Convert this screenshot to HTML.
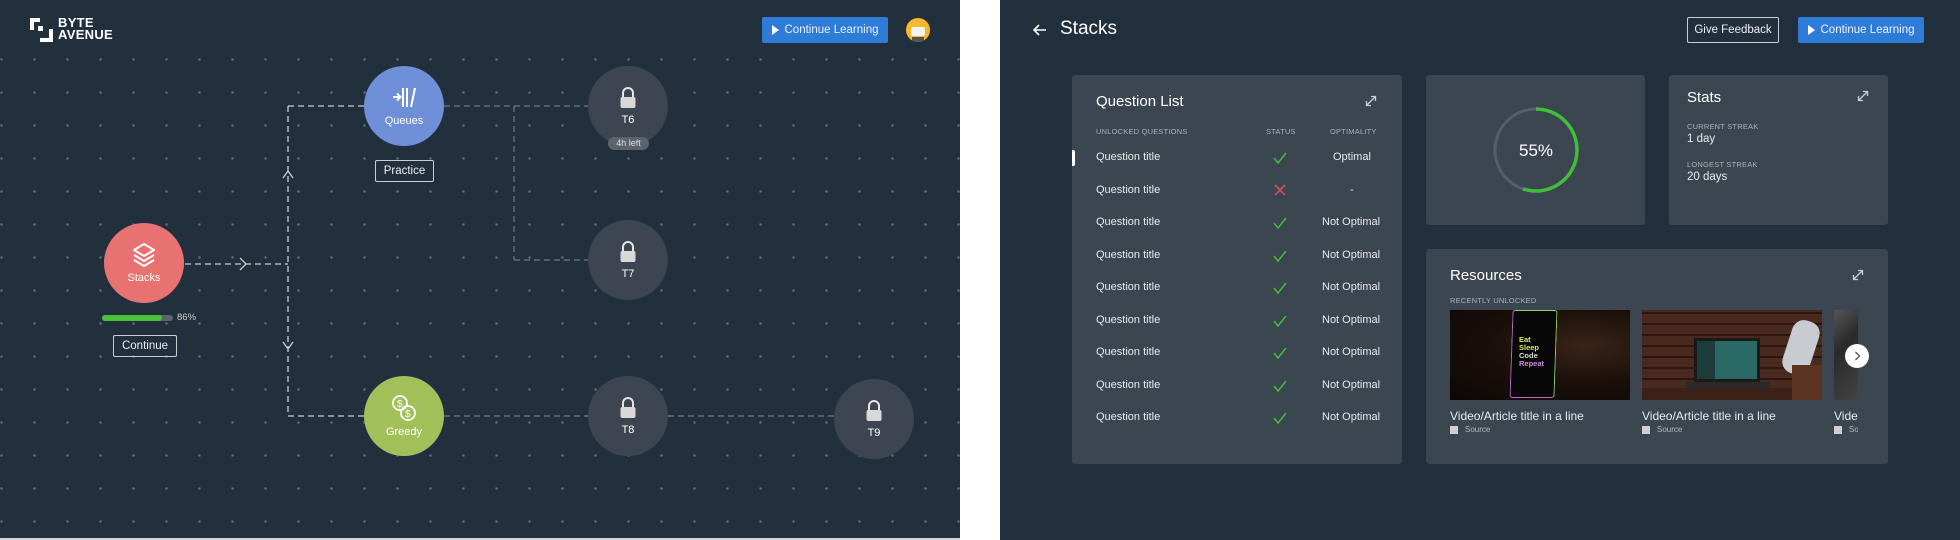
<!DOCTYPE html>
<html><head><meta charset="utf-8">
<style>
*{margin:0;padding:0;box-sizing:border-box}
body{width:1960px;height:540px;overflow:hidden;background:#fff;font-family:"Liberation Sans",sans-serif;color:#fff;position:relative}
.abs{position:absolute}
#left{left:0;top:0;width:960px;height:538px;background:#22303e;overflow:hidden}
#grid{left:-15.5px;top:43px;width:1000px;height:520px;background-image:radial-gradient(circle,rgba(200,210,220,.35) 1px,transparent 1.6px);background-size:33px 33px}
#right{left:1000px;top:0;width:960px;height:540px;background:#22303e}
.btnblue{background:#2f7bd8;border-radius:2px;font-size:11.5px;display:flex;align-items:center;justify-content:center;gap:6px;color:#eaf2ff}
.tri{width:0;height:0;border-left:7px solid #fff;border-top:5px solid transparent;border-bottom:5px solid transparent}
.node{border-radius:50%;width:80px;height:80px;display:flex;flex-direction:column;align-items:center;justify-content:center;font-size:11px}
.lock{background:#3d4650}
.ob{border:1px solid #c8ced4;border-radius:2px;font-size:11px;display:flex;align-items:center;justify-content:center;color:#eee}
.card{background:#3c4650;border-radius:3px}
.t{position:absolute;white-space:nowrap}
.row{font-size:11px;color:#e8eaec}
.hdr{font-size:7.5px;color:#aab2ba;letter-spacing:.2px}
</style></head><body>
<div id="left" class="abs">
  <div id="grid" class="abs"></div>
  <svg class="abs" style="left:0;top:0" width="960" height="540">
    <g fill="none" stroke="#c9ced4" stroke-width="1.3" stroke-dasharray="6 4">
      <line x1="185" y1="264" x2="288" y2="264"/>
      <line x1="288" y1="106" x2="288" y2="416"/>
      <line x1="288" y1="106" x2="364" y2="106"/>
      <line x1="288" y1="416" x2="364" y2="416"/>
    </g>
    <g fill="none" stroke="#6f7a86" stroke-width="1.2" stroke-dasharray="6 4">
      <line x1="444" y1="106" x2="588" y2="106"/>
      <line x1="514" y1="106" x2="514" y2="260"/>
      <line x1="514" y1="260" x2="588" y2="260"/>
      <line x1="444" y1="416" x2="588" y2="416"/>
      <line x1="668" y1="416" x2="834" y2="416"/>
    </g>
    <g fill="none" stroke="#c9ced4" stroke-width="1.3">
      <path d="M240 258 L246 264 L240 270"/>
      <path d="M283 178 L288 171 L293 178"/>
      <path d="M283 342 L288 349 L293 342"/>
    </g>
    <!-- logo -->
    <g fill="#fff">
      <path d="M30 18 H40 V22 H34 V30 H30 Z"/>
      <rect x="38" y="26" width="5" height="5"/>
      <path d="M53 42 H40 V38 H49 V29 H53 Z"/>
    </g>
  </svg>
  <div class="t" style="left:58px;top:17px;font-size:13px;font-weight:bold;line-height:12px;letter-spacing:.3px">BYTE<br>AVENUE</div>
  <div class="abs btnblue" style="left:762px;top:17px;width:126px;height:26px"><span class="tri"></span>Continue Learning</div>
  <div class="abs" style="left:906px;top:18px;width:24px;height:24px;border-radius:50%;background:#f6b92b;overflow:hidden">
    <div class="abs" style="left:5px;top:9px;width:14px;height:9px;background:#f3f3f3;border-radius:2px"></div>
    <div class="abs" style="left:6px;top:19px;width:12px;height:5px;background:#555"></div>
  </div>

  <!-- nodes -->
  <div class="abs node" style="left:364px;top:66px;background:#6f8fd8">
    <svg width="26" height="24" viewBox="0 0 26 24" fill="none" stroke="#fff" stroke-width="2"><path d="M2 12 H9 M6 8.5 L9.5 12 L6 15.5"/><path d="M12 3 V22 M16 3 V22 M24 3 L20 22"/></svg>
    <div style="margin-top:6px">Queues</div></div>
  <div class="abs ob" style="left:375px;top:160px;width:59px;height:22px;font-size:11.5px">Practice</div>

  <div class="abs node" style="left:104px;top:223px;background:#e87272">
    <svg width="26" height="26" viewBox="0 0 26 26" fill="none" stroke="#fff" stroke-width="2" stroke-linejoin="round"><path d="M13 2 L23 8 L13 14 L3 8 Z"/><path d="M3 13 L13 19 L23 13"/><path d="M3 18 L13 24 L23 18"/></svg>
    <div style="margin-top:4px">Stacks</div></div>
  <div class="abs" style="left:102px;top:315px;width:71px;height:6px;border-radius:3px;background:#5b636c"></div>
  <div class="abs" style="left:102px;top:315px;width:60px;height:6px;border-radius:3px;background:#4cc037"></div>
  <div class="t" style="left:177px;top:312px;font-size:9.5px;color:#ccc">86%</div>
  <div class="abs ob" style="left:113px;top:335px;width:64px;height:22px;font-size:11.5px">Continue</div>

  <div class="abs node" style="left:364px;top:376px;background:#a2c05a">
    <svg width="26" height="28" viewBox="0 0 26 28" fill="none" stroke="#fff" stroke-width="1.8"><circle cx="9" cy="9" r="7"/><circle cx="17" cy="19" r="7"/><text x="6" y="13" font-size="10" fill="#fff" stroke="none" font-family="Liberation Sans">$</text><text x="14" y="23" font-size="10" fill="#fff" stroke="none" font-family="Liberation Sans">$</text></svg>
    <div style="margin-top:4px">Greedy</div></div>

  <div class="abs node lock" style="left:588px;top:66px"><svg width="18" height="22" viewBox="0 0 18 22"><path d="M4 10 V6 A5 5 0 0 1 14 6 V10" fill="none" stroke="#e5e5e5" stroke-width="2"/><rect x="1.5" y="10" width="15" height="11" rx="2" fill="#d8d8d8"/></svg><div style="margin-top:5px">T6</div></div>
  <div class="abs" style="left:608px;top:137px;width:41px;height:13px;border-radius:7px;background:#5b636c;font-size:9px;color:#e0e0e0;text-align:center;line-height:13px">4h left</div>
  <div class="abs node lock" style="left:588px;top:220px"><svg width="18" height="22" viewBox="0 0 18 22"><path d="M4 10 V6 A5 5 0 0 1 14 6 V10" fill="none" stroke="#e5e5e5" stroke-width="2"/><rect x="1.5" y="10" width="15" height="11" rx="2" fill="#d8d8d8"/></svg><div style="margin-top:5px">T7</div></div>
  <div class="abs node lock" style="left:588px;top:376px"><svg width="18" height="22" viewBox="0 0 18 22"><path d="M4 10 V6 A5 5 0 0 1 14 6 V10" fill="none" stroke="#e5e5e5" stroke-width="2"/><rect x="1.5" y="10" width="15" height="11" rx="2" fill="#d8d8d8"/></svg><div style="margin-top:5px">T8</div></div>
  <div class="abs node lock" style="left:834px;top:379px"><svg width="18" height="22" viewBox="0 0 18 22"><path d="M4 10 V6 A5 5 0 0 1 14 6 V10" fill="none" stroke="#e5e5e5" stroke-width="2"/><rect x="1.5" y="10" width="15" height="11" rx="2" fill="#d8d8d8"/></svg><div style="margin-top:5px">T9</div></div>
</div>
<div class="abs" style="left:0;top:538px;width:960px;height:2px;background:#cfd5da"></div>

<div id="right" class="abs">
  <svg class="abs" style="left:32px;top:22px" width="16" height="16" viewBox="0 0 16 16" fill="none" stroke="#fff" stroke-width="1.6"><path d="M14 8 H2 M7 3 L2 8 L7 13"/></svg>
  <div class="t" style="left:60px;top:18px;font-size:19px">Stacks</div>
  <div class="abs ob" style="left:687px;top:17px;width:92px;height:26px;font-size:11.5px">Give Feedback</div>
  <div class="abs btnblue" style="left:798px;top:17px;width:126px;height:26px"><span class="tri"></span>Continue Learning</div>
</div>

<!-- Question list -->
<div class="abs card" style="left:1072px;top:75px;width:330px;height:389px"></div>
<div class="t" style="left:1096px;top:93px;font-size:15px">Question List</div>
<svg class="abs" style="left:1365px;top:95px" width="12" height="12" viewBox="0 0 12 12" fill="none" stroke="#c8ced4" stroke-width="1.3"><path d="M1.5 10.5 L10.5 1.5 M6 1.5 H10.5 V6 M1.5 6 V10.5 H6"/></svg>
<div class="t hdr" style="left:1096px;top:127px">UNLOCKED QUESTIONS</div>
<div class="t hdr" style="left:1266px;top:127px">STATUS</div>
<div class="t hdr" style="left:1330px;top:127px">OPTIMALITY</div>
<div class="abs" style="left:1072px;top:150px;width:3px;height:16px;background:#fff;border-radius:0 2px 2px 0"></div>
<div id="rows"></div>

<!-- progress -->
<div class="abs card" style="left:1426px;top:75px;width:219px;height:150px"></div>
<svg class="abs" style="left:1426px;top:75px" width="219" height="150">
  <circle cx="110" cy="75" r="41" fill="none" stroke="#565f69" stroke-width="3"/>
  <circle cx="110" cy="75" r="41" fill="none" stroke="#3fbf3a" stroke-width="3.5" stroke-dasharray="141.7 300" transform="rotate(-90 110 75)"/>
  <text x="110" y="81" text-anchor="middle" font-size="17" fill="#fff" font-family="Liberation Sans">55%</text>
</svg>

<!-- stats -->
<div class="abs card" style="left:1669px;top:75px;width:219px;height:150px"></div>
<div class="t" style="left:1687px;top:89px;font-size:15px">Stats</div>
<svg class="abs" style="left:1857px;top:90px" width="12" height="12" viewBox="0 0 12 12" fill="none" stroke="#c8ced4" stroke-width="1.3"><path d="M1.5 10.5 L10.5 1.5 M6 1.5 H10.5 V6 M1.5 6 V10.5 H6"/></svg>
<div class="t hdr" style="left:1687px;top:122px">CURRENT STREAK</div>
<div class="t row" style="left:1687px;top:133px;font-size:11.5px">1 day</div>
<div class="t hdr" style="left:1687px;top:160px">LONGEST STREAK</div>
<div class="t row" style="left:1687px;top:171px;font-size:11.5px">20 days</div>

<!-- resources -->
<div class="abs card" style="left:1426px;top:249px;width:462px;height:215px"></div>
<div class="t" style="left:1450px;top:267px;font-size:15px">Resources</div>
<svg class="abs" style="left:1852px;top:269px" width="12" height="12" viewBox="0 0 12 12" fill="none" stroke="#c8ced4" stroke-width="1.3"><path d="M1.5 10.5 L10.5 1.5 M6 1.5 H10.5 V6 M1.5 6 V10.5 H6"/></svg>
<div class="t hdr" style="left:1450px;top:296px">RECENTLY UNLOCKED</div>
<div class="abs" style="left:1450px;top:310px;width:180px;height:90px;background:radial-gradient(ellipse at 75% 40%,#3a2418 0%,#1a0f0a 50%,#0c0806 100%);overflow:hidden">
  <div class="abs" style="left:61px;top:0;width:45px;height:88px;border:1.5px solid #8fd06a;border-bottom-color:#c65fd8;border-left-color:#b070c8;border-radius:3px;background:#080808;transform:skewX(-2deg)"></div>
  <div class="t" style="left:69px;top:26px;font-size:7.5px;font-weight:bold;line-height:8px"><span style="color:#d6e86a">Eat<br>Sleep</span><br><span style="color:#ddd">Code</span><br><span style="color:#d58ae8">Repeat</span></div>
</div>
<div class="abs" style="left:1642px;top:310px;width:180px;height:90px;background:repeating-linear-gradient(0deg,#4a2a1e 0 9px,#2a1810 9px 11px),#4a2a1e;overflow:hidden">
  <div class="abs" style="left:52px;top:28px;width:66px;height:44px;background:#1a1a1a;padding:3px"><div style="width:100%;height:100%;background:linear-gradient(90deg,#1e3c3c 30%,#2a6a66 30%)"></div></div>
  <div class="abs" style="left:44px;top:72px;width:84px;height:6px;background:#2a2a2a"></div>
  <div class="abs" style="left:0;top:78px;width:180px;height:12px;background:#3a2218"></div>
  <div class="abs" style="left:145px;top:10px;width:28px;height:55px;background:#c8ccd0;border-radius:12px;transform:rotate(18deg)"></div>
  <div class="abs" style="left:150px;top:55px;width:30px;height:35px;background:#5a3322"></div>
</div>
<div class="abs" style="left:1834px;top:310px;width:24px;height:90px;background:linear-gradient(135deg,#555 0%,#2a2a2a 40%,#444 100%)"></div>
<div class="abs" style="left:1845px;top:344px;width:24px;height:24px;border-radius:50%;background:#fff"></div>
<svg class="abs" style="left:1851px;top:350px" width="12" height="12" viewBox="0 0 12 12" fill="none" stroke="#555" stroke-width="1.3"><path d="M4.5 2 L8.5 6 L4.5 10"/></svg>
<div class="t row" style="left:1450px;top:409px;font-size:12px">Video/Article title in a line</div>
<div class="t row" style="left:1642px;top:409px;font-size:12px">Video/Article title in a line</div>
<div class="abs" style="left:1834px;top:405px;width:24px;height:40px;overflow:hidden"><div class="t row" style="left:0;top:4px;font-size:12px">Video</div><div class="abs" style="left:0;top:21px;width:8px;height:8px;background:#cfcfcf"></div><div class="t" style="left:15px;top:20px;font-size:8px;color:#bbb">So</div></div>
<div class="abs" style="left:1450px;top:426px;width:8px;height:8px;background:#cfcfcf"></div>
<div class="t" style="left:1465px;top:425px;font-size:8px;color:#bbb">Source</div>
<div class="abs" style="left:1642px;top:426px;width:8px;height:8px;background:#cfcfcf"></div>
<div class="t" style="left:1657px;top:425px;font-size:8px;color:#bbb">Source</div>

<!-- rows static -->
<div class="t row" style="left:1096px;top:151px">Question title</div>
<svg class="abs" style="left:1273px;top:151px" width="14" height="14" viewBox="0 0 14 14" fill="none" stroke="#3fbf3a" stroke-width="1.5"><path d="M1 7 L5 12 L13 2"/></svg>
<div class="t row" style="left:1333px;top:151px">Optimal</div>

<div class="t row" style="left:1096px;top:184px">Question title</div>
<svg class="abs" style="left:1274px;top:184px" width="12" height="12" viewBox="0 0 12 12" fill="none" stroke="#e25252" stroke-width="1.5"><path d="M1 1 L11 11 M11 1 L1 11"/></svg>
<div class="t row" style="left:1350px;top:184px">-</div>

<div class="t row" style="left:1096px;top:216px">Question title</div><svg class="abs" style="left:1273px;top:216px" width="14" height="14" viewBox="0 0 14 14" fill="none" stroke="#3fbf3a" stroke-width="1.5"><path d="M1 7 L5 12 L13 2"/></svg><div class="t row" style="left:1322px;top:216px">Not Optimal</div>
<div class="t row" style="left:1096px;top:249px">Question title</div><svg class="abs" style="left:1273px;top:249px" width="14" height="14" viewBox="0 0 14 14" fill="none" stroke="#3fbf3a" stroke-width="1.5"><path d="M1 7 L5 12 L13 2"/></svg><div class="t row" style="left:1322px;top:249px">Not Optimal</div>
<div class="t row" style="left:1096px;top:281px">Question title</div><svg class="abs" style="left:1273px;top:281px" width="14" height="14" viewBox="0 0 14 14" fill="none" stroke="#3fbf3a" stroke-width="1.5"><path d="M1 7 L5 12 L13 2"/></svg><div class="t row" style="left:1322px;top:281px">Not Optimal</div>
<div class="t row" style="left:1096px;top:314px">Question title</div><svg class="abs" style="left:1273px;top:314px" width="14" height="14" viewBox="0 0 14 14" fill="none" stroke="#3fbf3a" stroke-width="1.5"><path d="M1 7 L5 12 L13 2"/></svg><div class="t row" style="left:1322px;top:314px">Not Optimal</div>
<div class="t row" style="left:1096px;top:346px">Question title</div><svg class="abs" style="left:1273px;top:346px" width="14" height="14" viewBox="0 0 14 14" fill="none" stroke="#3fbf3a" stroke-width="1.5"><path d="M1 7 L5 12 L13 2"/></svg><div class="t row" style="left:1322px;top:346px">Not Optimal</div>
<div class="t row" style="left:1096px;top:379px">Question title</div><svg class="abs" style="left:1273px;top:379px" width="14" height="14" viewBox="0 0 14 14" fill="none" stroke="#3fbf3a" stroke-width="1.5"><path d="M1 7 L5 12 L13 2"/></svg><div class="t row" style="left:1322px;top:379px">Not Optimal</div>
<div class="t row" style="left:1096px;top:411px">Question title</div><svg class="abs" style="left:1273px;top:411px" width="14" height="14" viewBox="0 0 14 14" fill="none" stroke="#3fbf3a" stroke-width="1.5"><path d="M1 7 L5 12 L13 2"/></svg><div class="t row" style="left:1322px;top:411px">Not Optimal</div>
</body></html>
